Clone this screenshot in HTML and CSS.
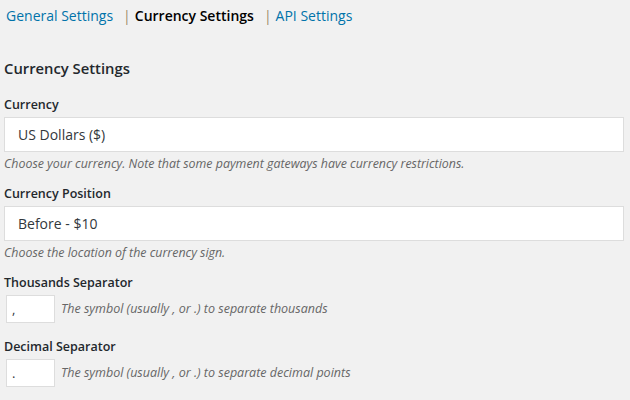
FILE: index.html
```html
<!DOCTYPE html>
<html lang="en">
<head>
    <meta charset="UTF-8">
    <title>Currency Settings</title>
    <link rel="stylesheet" href="styles.css">
</head>
<body>
    <div class="wrap">
        <ul class="subsubsub">
            <li><a href="#">General Settings</a></li>
            <li><span class="sep">|</span><a href="#" class="current">Currency Settings</a></li>
            <li><span class="sep">|</span><a href="#">API Settings</a></li>
        </ul>

        <h3 class="section-title">Currency Settings</h3>

        <div class="field">
            <label class="field-label" for="currency">Currency</label>
            <div class="select-box" id="currency">US Dollars ($)</div>
            <p class="description">Choose your currency. Note that some payment gateways have currency restrictions.</p>
        </div>

        <div class="field">
            <label class="field-label" for="position">Currency Position</label>
            <div class="select-box" id="position">Before - $10</div>
            <p class="description">Choose the location of the currency sign.</p>
        </div>

        <div class="field small">
            <label class="field-label" for="thousands">Thousands Separator</label>
            <div class="inline-row">
                <input type="text" id="thousands" class="small-text" value=",">
                <span class="description">The symbol (usually , or .) to separate thousands</span>
            </div>
        </div>

        <div class="field small">
            <label class="field-label" for="decimal">Decimal Separator</label>
            <div class="inline-row">
                <input type="text" id="decimal" class="small-text" value=".">
                <span class="description">The symbol (usually , or .) to separate decimal points</span>
            </div>
        </div>
    </div>
</body>
</html>
```

FILE: styles.css
```css
body {
    margin: 0;
    background-color: #f1f1f1;
    font-family: "Open Sans", sans-serif;
    color: #23282d;
    font-size: 13px;
}
.wrap {
    padding: 4px 6px 0 4px;
}
.subsubsub {
    list-style: none;
    margin: 0;
    padding: 0 0 0 2px;
    display: flex;
    font-size: 14px;
    line-height: 24px;
}
.subsubsub a {
    color: #0073aa;
    text-decoration: none;
}
.subsubsub a.current {
    color: #000;
    font-weight: 600;
}
.sep {
    color: #a0896a;
    margin: 0 4px 0 10px;
}
.section-title {
    font-size: 14.8px;
    font-weight: 600;
    margin: 30px 0 17px 0;
    line-height: 20px;
}
.field {
    margin-bottom: 11px;
}
.field-label {
    display: block;
    font-weight: 600;
    font-size: 12.5px;
    line-height: 18px;
    padding-top: 1px;
    margin-bottom: 3px;
}
.select-box {
    background: #fff;
    border: 1px solid #ddd;
    height: 35px;
    box-sizing: border-box;
    padding: 0 13px;
    font-size: 14px;
    line-height: 33px;
    color: #32373c;
}
.description {
    margin: 3px 0 0 0;
    font-style: italic;
    font-size: 12.4px;
    line-height: 18px;
    color: #666;
}
.inline-row {
    display: flex;
    align-items: center;
    padding-left: 2px;
}
.inline-row .description {
    margin: 0;
    font-size: 12.5px;
}
.small-text {
    width: 49px;
    height: 28px;
    box-sizing: border-box;
    border: 1px solid #ddd;
    background: #fff;
    margin: 0 6px 0 0;
    padding: 0 5px;
    font-family: "Open Sans", sans-serif;
    font-size: 13px;
    color: #32373c;
}
.small {
    margin-bottom: 14px;
}
```
